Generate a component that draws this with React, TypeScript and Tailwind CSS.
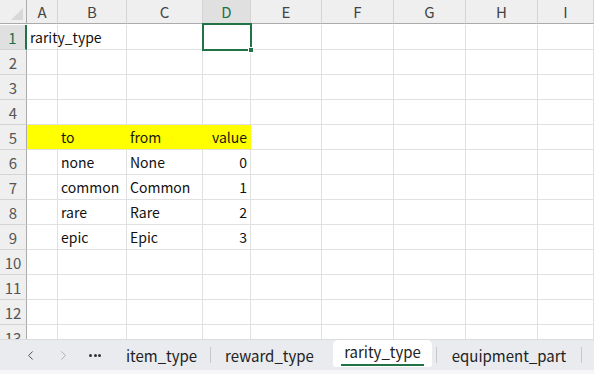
import { ChevronLeft, ChevronRight } from "lucide-react";

const cols = ["A", "B", "C", "D", "E", "F", "G", "H", "I"];
const widths = [31, 69, 76, 48, 71, 72, 72, 72, 56];

type Cell = { text?: string; right?: boolean; fill?: boolean };

const data: Record<number, Record<number, Cell>> = {
  1: { 0: { text: "rarity_type" } },
  5: {
    0: { fill: true },
    1: { text: "to", fill: true },
    2: { text: "from", fill: true },
    3: { text: "value", right: true, fill: true },
  },
  6: { 1: { text: "none" }, 2: { text: "None" }, 3: { text: "0", right: true } },
  7: { 1: { text: "common" }, 2: { text: "Common" }, 3: { text: "1", right: true } },
  8: { 1: { text: "rare" }, 2: { text: "Rare" }, 3: { text: "2", right: true } },
  9: { 1: { text: "epic" }, 2: { text: "Epic" }, 3: { text: "3", right: true } },
};

const rows = Array.from({ length: 13 }, (_, i) => i + 1);

function Sep() {
  return <div className="w-px bg-[#c8c8c8] my-[7px]" />;
}

export default function App() {
  const gridCols = `27px ${widths.map((w) => `${w}px`).join(" ")}`;

  return (
    <div
      className="w-[594px] h-[374px] bg-white flex flex-col overflow-hidden text-[#222]"
      style={{ fontFamily: '"Noto Sans CJK JP", "Noto Sans", sans-serif' }}
    >
      <div className="relative h-[339px] overflow-hidden">
        <div className="grid" style={{ gridTemplateColumns: gridCols, gridAutoRows: "25px" }}>
          {/* column headers */}
          <div className="h-[24px] bg-[#efefef] border-r border-b border-[#ababab] relative">
            <div className="absolute right-[3px] bottom-[3px] w-0 h-0 border-l-[12px] border-l-transparent border-b-[12px] border-b-[#d8d8d8]" />
          </div>
          {cols.map((c) => (
            <div
              key={c}
              className={`h-[24px] flex items-center justify-center text-[15px] leading-none border-r border-b border-r-[#d4d4d4] border-b-[#ababab] ${
                c === "D" ? "bg-[#e0e0e0] text-[#1e7145]" : "bg-[#efefef] text-[#444]"
              }`}
            >
              {c}
            </div>
          ))}

          {rows.map((r) => (
            <div key={r} className="contents">
              <div
                className={`flex items-center justify-center text-[15px] leading-none border-b border-[#d4d4d4] ${
                  r === 1
                    ? "bg-[#e0e0e0] text-[#1e7145] border-r-2 border-r-[#217346]"
                    : "bg-[#efefef] text-[#555] border-r border-r-[#ababab]"
                }`}
              >
                {r}
              </div>
              {cols.map((_, ci) => {
                const cell = data[r]?.[ci] ?? {};
                return (
                  <div
                    key={ci}
                    className={`flex items-center px-[3px] text-[14px] leading-none whitespace-nowrap border-b border-r ${
                      cell.fill ? "bg-[#ffff00] border-b-[#e1e1e1] border-r-[#ffff00]" : "border-[#e1e1e1]"
                    } ${ci === 3 && cell.fill ? "border-r-[#e1e1e1]" : ""} ${
                      cell.right ? "justify-end" : "justify-start"
                    } ${r === 5 ? "text-[#1a1a00]" : "text-[#111]"}`}
                  >
                    {cell.text}
                  </div>
                );
              })}
            </div>
          ))}
        </div>

        {/* selection D1 */}
        <div className="absolute left-[202px] top-[23px] w-[50px] h-[28px] border-2 border-[#217346] pointer-events-none" />
        <div className="absolute left-[248px] top-[47px] w-[6px] h-[6px] bg-[#217346] border border-white" />
      </div>

      {/* sheet tabs */}
      <div className="h-[31px] bg-[#e9ebee] border-t border-[#dcdcdc] flex items-stretch text-[15px] leading-none">
        <div className="flex items-center w-[113px]">
          <ChevronLeft size={15} strokeWidth={1.5} className="text-[#444] ml-[23px]" />
          <ChevronRight size={15} strokeWidth={1.5} className="text-[#aaa] ml-[18px]" />
          <div className="flex gap-[1.5px] ml-[18px]">
            <span className="w-[3px] h-[3px] rounded-full bg-[#333]" />
            <span className="w-[3px] h-[3px] rounded-full bg-[#333]" />
            <span className="w-[3px] h-[3px] rounded-full bg-[#333]" />
          </div>
        </div>
        <div className="w-[97px] flex items-center justify-center">item_type</div>
        <Sep />
        <div className="w-[117px] flex items-center justify-center">reward_type</div>
        <div className="w-[5px]" />
        <div className="w-[99px] mb-[3px] bg-white rounded-t-[5px] rounded-b-[3px] flex flex-col items-center justify-center">
          <span className="pt-[2px]">rarity_type</span>
          <span className="mt-[5px] h-[2px] w-[83px] bg-[#217346]" />
        </div>
        <div className="w-[4px]" />
        <Sep />
        <div className="w-[144px] flex items-center justify-center">equipment_part</div>
        <Sep />
      </div>
      <div className="flex-1 bg-[#f7f7f7]" />
    </div>
  );
}
